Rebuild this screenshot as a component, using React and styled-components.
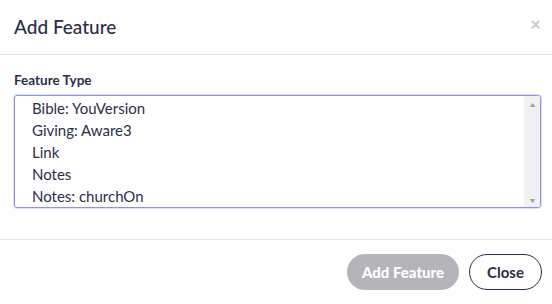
import styled, { createGlobalStyle } from "styled-components";

const GlobalStyle = createGlobalStyle`
    html, body {
        margin: 0;
        padding: 0;
        background: #ffffff;
    }
    body {
        font-family: Lato, "Noto Sans", sans-serif;
        color: #2c2e48;
    }
`;

const features = [
    "Bible: YouVersion",
    "Giving: Aware3",
    "Link",
    "Notes",
    "Notes: churchOn",
];

function App() {
    return (
        <>
            <GlobalStyle />
            <Modal>
                <Header>
                    <Title>Add Feature</Title>
                    <CloseX aria-label="close">×</CloseX>
                </Header>
                <Body>
                    <Label>Feature Type</Label>
                    <ListBox>
                        <Options>
                            {features.map((f) => (
                                <Option key={f}>{f}</Option>
                            ))}
                        </Options>
                        <ScrollTrack>
                            <Arrow>▲</Arrow>
                            <Arrow>▼</Arrow>
                        </ScrollTrack>
                    </ListBox>
                </Body>
                <Footer>
                    <PrimaryButton disabled>Add Feature</PrimaryButton>
                    <OutlineButton>Close</OutlineButton>
                </Footer>
            </Modal>
        </>
    );
}

const Modal = styled.div`
    width: 552px;
    height: 304px;
    display: flex;
    flex-direction: column;
    background: #fff;
`;

const Header = styled.div`
    height: 55px;
    box-sizing: border-box;
    display: flex;
    align-items: center;
    justify-content: space-between;
    padding: 0 11px 1px 14px;
    border-bottom: 1px solid #e6e6e9;
`;

const Title = styled.h5`
    margin: 0;
    font-size: 19px;
    font-weight: 500;
    color: #2c2e48;
`;

const CloseX = styled.span`
    font-size: 19px;
    font-weight: 700;
    color: #c8c8cc;
    line-height: 1;
    margin-top: -6px;
`;

const Body = styled.div`
    flex: 1;
    padding: 17px 11px 0 14px;
    border-bottom: 1px solid #e6e6e9;
`;

const Label = styled.div`
    font-size: 13.5px;
    font-weight: 700;
    color: #2c2e48;
    margin-bottom: 7px;
`;

const ListBox = styled.div`
    height: 111px;
    display: flex;
    border: 1px solid #8f8ff2;
    border-radius: 3px;
    box-shadow: 0 0 0 1px rgba(160, 160, 250, 0.35);
    overflow: hidden;
`;

const Options = styled.div`
    flex: 1;
    padding-top: 1px;
`;

const Option = styled.div`
    font-size: 15px;
    line-height: 22px;
    height: 22px;
    padding-left: 17px;
    color: #2c2e48;
`;

const ScrollTrack = styled.div`
    width: 16px;
    background: #f1f1f1;
    display: flex;
    flex-direction: column;
    justify-content: space-between;
    align-items: center;
    padding: 3px 0 2px;
`;

const Arrow = styled.span`
    font-size: 7px;
    line-height: 10px;
    color: #a3a3a3;
    transform: scaleX(1.3);
`;

const Footer = styled.div`
    height: 64px;
    display: flex;
    align-items: center;
    justify-content: flex-end;
    gap: 10px;
    padding: 0 10px 0 0;
`;

const PrimaryButton = styled.button`
    height: 36px;
    width: 112px;
    border: none;
    border-radius: 18px;
    background: #b4b4ba;
    color: #fff;
    font-family: Lato, "Noto Sans", sans-serif;
    font-size: 15px;
    font-weight: 900;
`;

const OutlineButton = styled.button`
    height: 36px;
    width: 73px;
    border: 1px solid #2c2e48;
    border-radius: 18px;
    background: #fff;
    color: #2c2e48;
    font-family: Lato, "Noto Sans", sans-serif;
    font-size: 15px;
    font-weight: 700;
`;

export default App;
